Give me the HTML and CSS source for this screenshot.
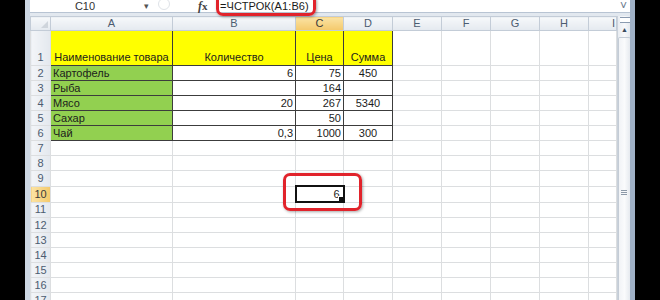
FILE: index.html
```html
<!DOCTYPE html>
<html lang="ru">
<head>
  <meta charset="UTF-8" />
  <title>ЧСТРОК</title>
  <link rel="stylesheet" href="styles.css">
</head>
<body>
  <div class="screen">
    <div class="edge"></div>

    <div class="window">
      <div class="formula-bar">
        <div class="name-box">C10</div>
        <div class="name-arrow">▾</div>
        <div class="fx-buttons"><span class="ghost-btn"></span></div>
        <div class="fx"><i>f</i>x</div>
        <div class="formula">=ЧСТРОК(A1:B6)</div>
        <div class="expand">˅</div>
      </div>

      <div class="sheet">
        <table class="grid">
          <colgroup>
            <col class="w-head"><col class="w-a"><col class="w-b"><col class="w-c">
            <col class="w-d"><col class="w-d"><col class="w-d"><col class="w-d"><col class="w-d"><col class="w-i">
          </colgroup>
          <tr class="col-heads">
            <th class="corner"><span class="tri"></span></th>
            <th>A</th><th>B</th><th class="active">C</th><th>D</th>
            <th>E</th><th>F</th><th>G</th><th>H</th><th class="cut">I</th>
          </tr>
          <tr class="tall">
            <th class="row-head">1</th>
            <td class="t yellow center">Наименование товара</td>
            <td class="t yellow center">Количество</td>
            <td class="t yellow center">Цена</td>
            <td class="t yellow center">Сумма</td>
            <td></td><td></td><td></td><td></td><td></td>
          </tr>
          <tr>
            <th class="row-head">2</th>
            <td class="t green">Картофель</td>
            <td class="t num">6</td>
            <td class="t num">75</td>
            <td class="t center">450</td>
            <td></td><td></td><td></td><td></td><td></td>
          </tr>
          <tr>
            <th class="row-head">3</th>
            <td class="t green">Рыба</td>
            <td class="t num"></td>
            <td class="t num">164</td>
            <td class="t center"></td>
            <td></td><td></td><td></td><td></td><td></td>
          </tr>
          <tr>
            <th class="row-head">4</th>
            <td class="t green">Мясо</td>
            <td class="t num">20</td>
            <td class="t num">267</td>
            <td class="t center">5340</td>
            <td></td><td></td><td></td><td></td><td></td>
          </tr>
          <tr>
            <th class="row-head">5</th>
            <td class="t green">Сахар</td>
            <td class="t num"></td>
            <td class="t num">50</td>
            <td class="t center"></td>
            <td></td><td></td><td></td><td></td><td></td>
          </tr>
          <tr>
            <th class="row-head">6</th>
            <td class="t green">Чай</td>
            <td class="t num">0,3</td>
            <td class="t num">1000</td>
            <td class="t center">300</td>
            <td></td><td></td><td></td><td></td><td></td>
          </tr>
          <tr><th class="row-head">7</th><td></td><td></td><td></td><td></td><td></td><td></td><td></td><td></td><td></td></tr>
          <tr><th class="row-head">8</th><td></td><td></td><td></td><td></td><td></td><td></td><td></td><td></td><td></td></tr>
          <tr><th class="row-head">9</th><td></td><td></td><td></td><td></td><td></td><td></td><td></td><td></td><td></td></tr>
          <tr>
            <th class="row-head active">10</th>
            <td></td><td></td>
            <td class="selected num">6<span class="handle"></span></td>
            <td></td><td></td><td></td><td></td><td></td><td></td>
          </tr>
          <tr><th class="row-head">11</th><td></td><td></td><td></td><td></td><td></td><td></td><td></td><td></td><td></td></tr>
          <tr><th class="row-head">12</th><td></td><td></td><td></td><td></td><td></td><td></td><td></td><td></td><td></td></tr>
          <tr><th class="row-head">13</th><td></td><td></td><td></td><td></td><td></td><td></td><td></td><td></td><td></td></tr>
          <tr><th class="row-head">14</th><td></td><td></td><td></td><td></td><td></td><td></td><td></td><td></td><td></td></tr>
          <tr><th class="row-head">15</th><td></td><td></td><td></td><td></td><td></td><td></td><td></td><td></td><td></td></tr>
          <tr><th class="row-head">16</th><td></td><td></td><td></td><td></td><td></td><td></td><td></td><td></td><td></td></tr>
          <tr><th class="row-head">17</th><td></td><td></td><td></td><td></td><td></td><td></td><td></td><td></td><td></td></tr>
        </table>

        <div class="vscroll">
          <div class="split"></div>
          <div class="arrow-up">▲</div>
          <div class="thumb"><span class="grip"></span></div>
        </div>
      </div>
    </div>

    <div class="edge"></div>

    <!-- red marks drawn over the screenshot -->
    <div class="callout callout-formula"></div>
    <div class="callout callout-cell"></div>
  </div>
</body>
</html>
```

FILE: styles.css
```css
html, body {
  margin: 0;
  padding: 0;
  background-color: #000;
}

.screen {
  position: relative;
  display: flex;
  width: 660px;
  height: 300px;
  overflow: hidden;
  font-family: "Liberation Sans", Arial, sans-serif;
}

.edge {
  width: 25px;
  flex: none;
  background-color: #000;
}

.window {
  width: 600px;
  flex: none;
  border-left: 5px solid #cdd7e3;
  border-right: 5px solid #9fb1c6;
  background-color: #e2e8ef;
}

/* formula bar */
.formula-bar {
  display: flex;
  align-items: center;
  height: 12px;
  background-color: #fff;
  border-bottom: 1px solid #b8c4d3;
  margin-bottom: 3px;
  font-size: 11px;
  color: #222;
  position: relative;
}

.name-box {
  width: 110px;
  text-align: center;
  color: #333;
}

.name-arrow {
  width: 12px;
  font-size: 9px;
  color: #555;
  text-align: center;
}

.fx-buttons {
  width: 46px;
  height: 12px;
  position: relative;
}

.ghost-btn {
  position: absolute;
  left: 6px;
  top: -2px;
  width: 10px;
  height: 10px;
  border: 1px solid #dfe3e8;
  border-radius: 50%;
}

.fx {
  width: 14px;
  font-family: "Liberation Serif", serif;
  font-size: 11px;
  font-weight: bold;
  color: #444;
}

.fx i {
  font-size: 12px;
}

.formula {
  flex: 1;
  padding-left: 8px;
  font-size: 11px;
  color: #1a1a1a;
  letter-spacing: 0.1px;
}

.expand {
  width: 13px;
  text-align: center;
  font-size: 12px;
  color: #6a7a8c;
  line-height: 10px;
}

/* sheet */
.sheet {
  display: flex;
  height: 284px;
  overflow: hidden;
  background-color: #fff;
}

.grid {
  border-collapse: collapse;
  table-layout: fixed;
  width: 586px;
  flex: none;
  font-size: 11px;
  color: #1c1c1c;
}

.w-head { width: 20px; }
.w-a { width: 122px; }
.w-b { width: 123px; }
.w-c { width: 48px; }
.w-d { width: 49px; }
.w-i { width: 28px; }

.grid td,
.grid th {
  height: 14px;
  padding: 0 2px;
  line-height: 13px;
  white-space: nowrap;
  overflow: hidden;
  border: 1px solid #dcdee0;
}

.grid tr.tall td,
.grid tr.tall th {
  height: 33px;
  vertical-align: bottom;
  padding-bottom: 1px;
}

.col-heads th {
  height: 13px;
  font-weight: normal;
  color: #4c5c70;
  background: linear-gradient(#f6f8fa, #e4e9ef);
  border-color: #c3ccd7;
  border-top-color: #c3ccd7;
  text-align: center;
}

.col-heads th.active {
  background: linear-gradient(#fbe3a4, #f4c96a);
  color: #3a3a3a;
}

.col-heads th.cut {
  text-align: right;
  padding-right: 1px;
}

.corner {
  position: relative;
}

.corner .tri {
  position: absolute;
  right: 2px;
  bottom: 2px;
  width: 0;
  height: 0;
  border-left: 7px solid transparent;
  border-bottom: 7px solid #cfd5dc;
}

.row-head {
  font-weight: normal;
  text-align: center;
  color: #4c5c70;
  background: linear-gradient(90deg, #f3f5f8, #e3e8ee);
  border-color: #c3ccd7;
}

.row-head.active {
  background: linear-gradient(90deg, #fbe3a4, #f4c96a);
  color: #3a3a3a;
}

.grid td.t {
  border: 1px solid #3c3c3c;
}

.yellow {
  background-color: #ffff00;
}

.green {
  background-color: #92d050;
}

.center {
  text-align: center;
}

.num {
  text-align: right;
}

.grid td.selected {
  position: relative;
  border: 2px solid #111;
  padding-right: 3px;
}

.handle {
  position: absolute;
  right: -1px;
  bottom: -1px;
  width: 4px;
  height: 4px;
  background-color: #111;
  border: 1px solid #fff;
}

/* vertical scrollbar */
.vscroll {
  width: 14px;
  flex: none;
  background: linear-gradient(90deg, #e9edf2, #f7f8fa 50%, #e2e7ed);
  border-left: 1px solid #c9d1da;
  box-sizing: border-box;
  display: flex;
  flex-direction: column;
  align-items: center;
}

.split {
  width: 10px;
  height: 4px;
  margin-top: 1px;
  border-top: 1px solid #8b9bb0;
  border-bottom: 1px solid #8b9bb0;
  background-color: #fff;
}

.arrow-up {
  font-size: 7px;
  line-height: 10px;
  color: #3b4a5c;
  margin-top: 2px;
}

.thumb {
  width: 11px;
  flex: 1;
  margin-top: 2px;
  border: 1px solid #c4ccd6;
  border-bottom: none;
  border-radius: 2px 2px 0 0;
  background: linear-gradient(90deg, #f1f3f6, #fafbfc 50%, #e6eaef);
  position: relative;
}

.grip {
  position: absolute;
  left: 2px;
  top: 152px;
  width: 6px;
  height: 5px;
  border-top: 1px solid #8c99a8;
  border-bottom: 1px solid #8c99a8;
  box-sizing: border-box;
}

.grip::after {
  content: "";
  position: absolute;
  left: 0;
  top: 1px;
  width: 6px;
  border-top: 1px solid #8c99a8;
}

/* red marks */
.callout {
  position: absolute;
  border: 3px solid #e1232b;
  border-radius: 7px;
  box-shadow: 1px 1px 3px rgba(0, 0, 0, 0.35);
}

.callout-formula {
  left: 216px;
  top: -6px;
  width: 94px;
  height: 16px;
}

.callout-cell {
  left: 283px;
  top: 173px;
  width: 73px;
  height: 32px;
}
```
